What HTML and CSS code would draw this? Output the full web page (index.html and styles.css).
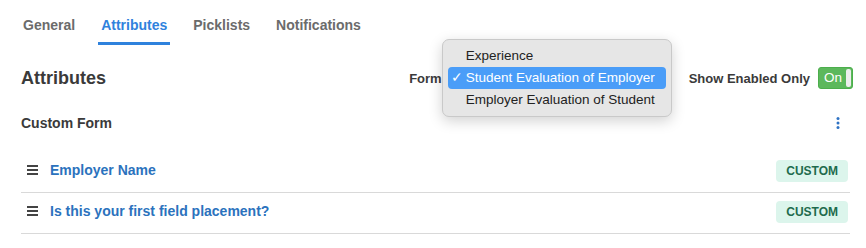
FILE: index.html
```html
<!DOCTYPE html>
<html lang="en">
<head>
  <meta charset="UTF-8" />
  <title>Attributes</title>
  <link rel="stylesheet" href="styles.css">
</head>
<body>
  <div class="page">
    <nav class="tabs">
      <a class="tab">General</a>
      <a class="tab active">Attributes</a>
      <a class="tab">Picklists</a>
      <a class="tab">Notifications</a>
    </nav>

    <div class="toolbar">
      <h1>Attributes</h1>
      <div class="filters">
        <span class="label">Form</span>
        <div class="form-select">
          <div class="select-box"></div>
          <ul class="menu">
            <li>Experience</li>
            <li class="selected"><span class="check">&#10003;</span>Student Evaluation of Employer</li>
            <li>Employer Evaluation of Student</li>
          </ul>
        </div>
        <span class="label">Show Enabled Only</span>
        <div class="toggle">On<span class="knob"></span></div>
      </div>
    </div>

    <div class="section-head">
      <h2>Custom Form</h2>
      <svg class="kebab" width="4" height="12" viewBox="0 0 4 12">
        <circle cx="2" cy="1.6" r="1.5" fill="#2f73c4"/>
        <circle cx="2" cy="6" r="1.5" fill="#2f73c4"/>
        <circle cx="2" cy="10.4" r="1.5" fill="#2f73c4"/>
      </svg>
    </div>

    <div class="rows">
      <div class="row">
        <span class="grip"><i></i><i></i><i></i></span>
        <a class="name">Employer Name</a>
        <span class="badge">CUSTOM</span>
      </div>
      <div class="row">
        <span class="grip"><i></i><i></i><i></i></span>
        <a class="name">Is this your first field placement?</a>
        <span class="badge">CUSTOM</span>
      </div>
    </div>
  </div>
</body>
</html>
```

FILE: styles.css
```css
body {
  margin: 0;
  font-family: "Liberation Sans", Arial, sans-serif;
  color: #333;
  background: #fff;
}

.page {
  padding: 0 16px 0 21px;
}

.tabs {
  display: flex;
  gap: 20px;
  padding-top: 17px;
  margin-left: -1px;
}

.tab {
  font-size: 14px;
  font-weight: bold;
  line-height: 16px;
  color: #6b6b6b;
  padding: 0 3px 9px;
  border-bottom: 3px solid transparent;
}

.tab.active {
  color: #2f82dd;
  border-bottom-color: #2f82dd;
}

.toolbar {
  display: flex;
  justify-content: space-between;
  align-items: center;
  height: 44px;
  margin-top: 11px;
}

h1 {
  margin: 0;
  font-size: 18px;
  font-weight: bold;
  color: #3a3a3a;
}

.filters {
  display: flex;
  align-items: center;
  margin-right: -3px;
}

.label {
  font-size: 13px;
  font-weight: bold;
  color: #3a3a3a;
}

.form-select {
  position: relative;
  width: 225px;
  margin: 0 18px 0 4px;
}

.select-box {
  height: 22px;
}

.menu {
  position: absolute;
  top: -28px;
  left: -4px;
  width: 218px;
  margin: 0;
  padding: 5px;
  list-style: none;
  background: #e6e6e6;
  border: 1px solid #c9c9c9;
  border-radius: 7px;
  box-shadow: 0 4px 14px rgba(0, 0, 0, 0.18);
  font-size: 13.5px;
  color: #222;
  z-index: 10;
}

.menu li {
  height: 22px;
  line-height: 22px;
  padding-left: 18px;
  border-radius: 4px;
  position: relative;
}

.menu li.selected {
  background: #4a9df8;
  color: #fff;
}

.check {
  position: absolute;
  left: 3px;
}

.toggle {
  position: relative;
  width: 35px;
  height: 22px;
  margin-left: 8px;
  background: #5cb85c;
  border: 1px solid #4cae4c;
  border-radius: 3px;
  box-sizing: border-box;
  color: #fff;
  font-size: 13.5px;
  line-height: 20px;
  padding-left: 5px;
}

.knob {
  position: absolute;
  right: 1px;
  top: 1px;
  width: 5px;
  height: 18px;
  background: #eee;
  border-radius: 2px;
}

.section-head {
  display: flex;
  justify-content: space-between;
  align-items: center;
  height: 16px;
  margin-top: 15px;
  padding-right: 10px;
}

h2 {
  margin: 0;
  font-size: 14px;
  font-weight: bold;
  color: #3a3a3a;
}

.rows {
  margin-top: 21px;
}

.row {
  display: flex;
  align-items: center;
  height: 36px;
  padding: 0 0 4px 6px;
  border-bottom: 1px solid #d9d9d9;
}

.grip {
  display: flex;
  flex-direction: column;
  gap: 2px;
  width: 11px;
  margin-right: 12px;
}

.grip i {
  display: block;
  height: 2px;
  background: #444;
}

.name {
  flex: 1;
  font-size: 14px;
  font-weight: bold;
  color: #2b72bd;
}

.badge {
  background: #dcf5ec;
  color: #1e6b4d;
  font-size: 12px;
  font-weight: bold;
  padding: 4px 10px;
  border-radius: 4px;
  margin: 2px 2px 0 0;
}
```
